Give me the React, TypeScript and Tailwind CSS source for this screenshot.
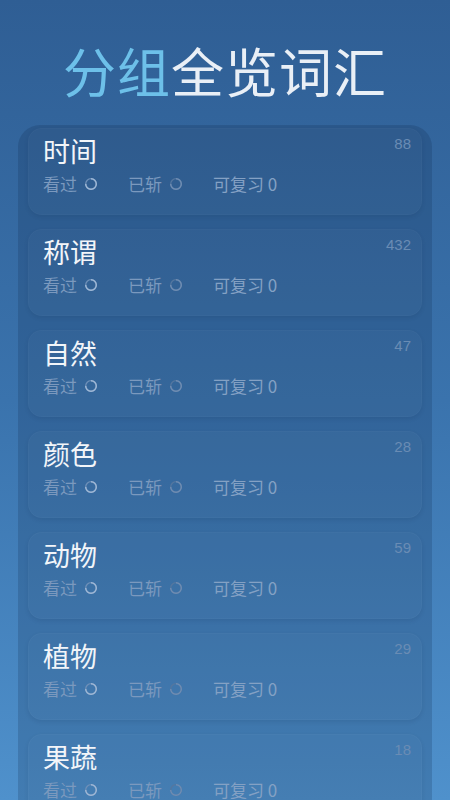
import React from "react";

const items = [
  { name: "时间", count: 88 },
  { name: "称谓", count: 432 },
  { name: "自然", count: 47 },
  { name: "颜色", count: 28 },
  { name: "动物", count: 59 },
  { name: "植物", count: 29 },
  { name: "果蔬", count: 18 },
];

function Ring({ bright }: { bright: boolean }) {
  return (
    <svg width="14" height="14" viewBox="0 0 14 14" className="shrink-0">
      <circle cx="7" cy="7" r="5.3" fill="none" stroke={bright ? "#6f90b8" : "#55779f"} strokeWidth="1.3" />
      <path
        d="M7 1.7 A5.3 5.3 0 1 1 1.7 7"
        fill="none"
        stroke={bright ? "#9fb8d6" : "#6f8db3"}
        strokeWidth="1.4"
      />
    </svg>
  );
}

export default function App() {
  return (
    <div
      className="w-[450px] h-[800px] overflow-hidden bg-gradient-to-b from-[#2f5e94] via-[#3a73ad] to-[#4f91cc]"
      style={{ fontFamily: '"Noto Sans CJK SC", "Noto Sans", sans-serif' }}
    >
      <div className="h-[125px] flex items-center justify-center pt-[16px]">
        <h1 className="text-[53px] leading-none tracking-[1px] font-normal">
          <span className="text-[#6dc0e9]">分组</span>
          <span className="text-[#e9eff6]">全览词汇</span>
        </h1>
      </div>
      <div className="mx-[18px] rounded-t-[22px] bg-[#102a4a]/20 px-[10px] pt-[3px] h-[700px]">
        {items.map((it) => (
          <div
            key={it.name}
            className="relative h-[87px] mb-[14px] rounded-[14px] bg-white/[0.02] border border-white/[0.025] shadow-[0_2px_4px_rgba(10,30,60,0.1)] pl-[14px] pt-[3px]"
          >
            <div className="absolute right-[10px] top-[4px] text-[15px] text-[#6a8cb4]" style={{ fontFamily: '"Liberation Sans", sans-serif' }}>
              {it.count}
            </div>
            <div className="text-[27px] leading-[38px] text-[#f2f5f9]">{it.name}</div>
            <div className="flex items-center text-[17px] leading-[24px] text-[#7b99be] mt-[2px]">
              <span>看过</span>
              <span className="ml-[7px]"><Ring bright={true} /></span>
              <span className="ml-[30px]">已斩</span>
              <span className="ml-[7px]"><Ring bright={false} /></span>
              <span className="ml-[30px] text-[#84a1c4]">可复习&nbsp;0</span>
            </div>
          </div>
        ))}
      </div>
    </div>
  );
}
